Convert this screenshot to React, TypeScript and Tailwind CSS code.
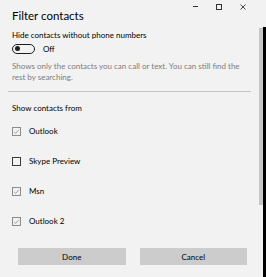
const sources = [
  { name: 'Outlook', checked: true },
  { name: 'Skype Preview', checked: false },
  { name: 'Msn', checked: true },
  { name: 'Outlook 2', checked: true }
]

function CheckBox({ checked }: { checked: boolean }) {
  return (
    <div
      className={
        'flex items-center justify-center w-[9px] h-[9px] border ' +
        (checked ? 'border-[#8c8c8c]' : 'border-[#3c3c3c]')
      }
    >
      {checked && (
        <svg width="7" height="7" viewBox="0 0 7 7">
          <path d="M1 3.8 L2.7 5.4 L6 1.6" fill="none" stroke="#9a9a9a" strokeWidth="0.9" />
        </svg>
      )}
    </div>
  )
}

export default function App() {
  return (
    <div className="flex w-[266px] h-[277px] bg-[#f2f2f2] font-['Lato',sans-serif] text-black overflow-hidden">
      <div className="flex flex-col w-[259px] pl-[12px] pr-[12px]">
        <div className="flex justify-between h-[27px]">
          <div className="pt-[9px] text-[11.5px] leading-[14px]">Filter contacts</div>
          <div className="flex items-start pt-[4px] -mr-[8px]">
            <div className="w-[24px] flex justify-center pt-[2px]">
              <div className="w-[5px] h-px bg-[#333]"></div>
            </div>
            <div className="w-[24px] flex justify-center">
              <div className="w-[6px] h-[6px] border border-[#333]"></div>
            </div>
            <div className="w-[24px] flex justify-center">
              <svg width="6" height="6" viewBox="0 0 6 6">
                <path d="M0.5 0.5 L5.5 5.5 M5.5 0.5 L0.5 5.5" stroke="#333" strokeWidth="0.9" />
              </svg>
            </div>
          </div>
        </div>

        <div className="flex items-center h-[15px] text-[8px]">
          Hide contacts without phone numbers
        </div>

        <div className="flex items-center h-[13px]">
          <div className="flex items-center w-[23px] h-[10px] rounded-full border-[1.5px] border-[#1e1e1e] pl-[2px]">
            <div className="w-[5px] h-[5px] rounded-full bg-[#1e1e1e]"></div>
          </div>
          <span className="ml-[8px] text-[8px]">Off</span>
        </div>

        <p className="mt-[6px] -mr-[6px] text-[8px] leading-[11px] text-[#7d7d7d]">
          Shows only the contacts you can call or text. You can still find the rest by searching.
        </p>

        <div className="mt-[8px] -mx-[4px] h-px bg-[#c4c4c4]"></div>

        <div className="flex items-center mt-[10px] h-[12px] text-[8px]">Show contacts from</div>

        <div className="flex flex-col mt-[2px]">
          {sources.map((s) => (
            <div key={s.name} className="flex items-center h-[30px] gap-[8px] text-[8px]">
              <CheckBox checked={s.checked} />
              <span>{s.name}</span>
            </div>
          ))}
        </div>

        <div className="flex gap-[14px] mt-[12px] ml-[6px]">
          <button className="w-[108px] h-[17px] bg-[#cccccc] text-[8px] text-black">Done</button>
          <button className="w-[108px] h-[17px] bg-[#cccccc] text-[8px] text-black">Cancel</button>
        </div>
      </div>

      <div className="flex flex-col w-[7px]">
        <div className="h-[27px]"></div>
        <div className="flex flex-1">
          <div className="w-[4px] flex flex-col">
            <div className="mt-[1px] h-[177px] bg-[#c6c6c6]"></div>
          </div>
          <div className="w-[3px] bg-black"></div>
        </div>
      </div>
    </div>
  )
}
